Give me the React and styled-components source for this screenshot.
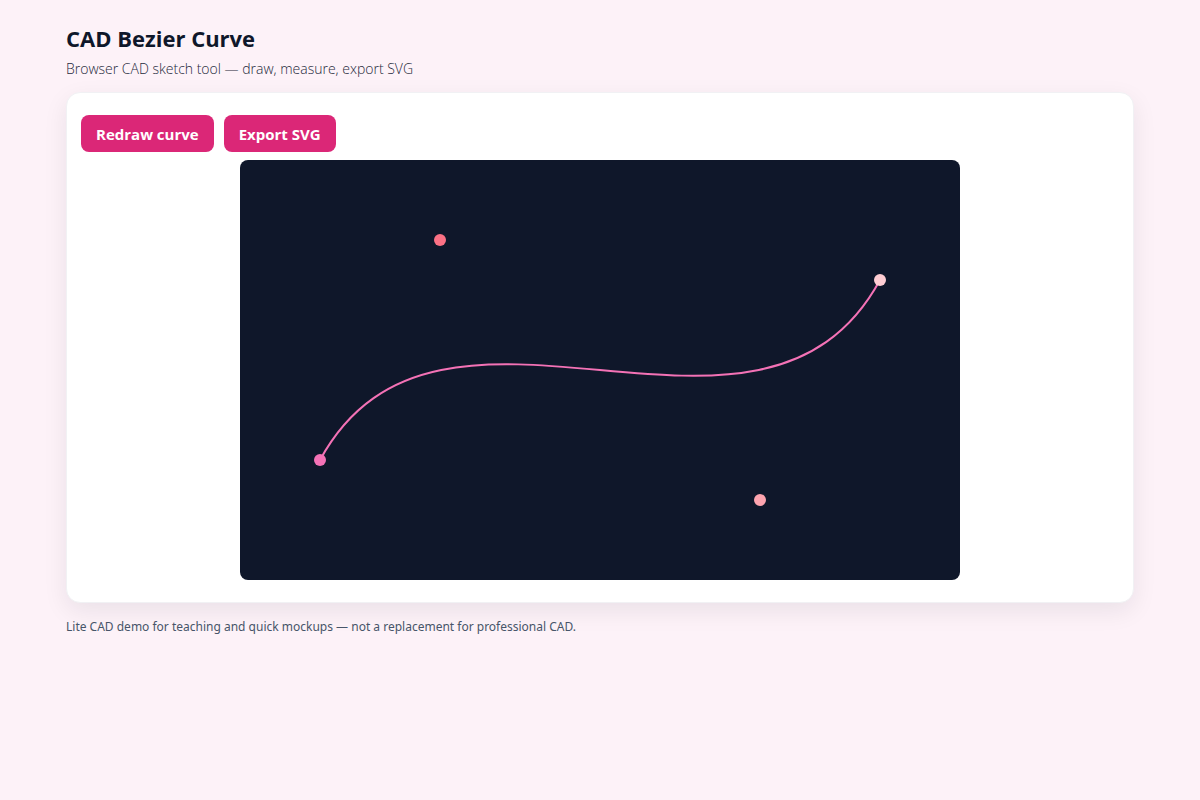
import { useRef, useState } from "react";
import styled, { createGlobalStyle } from "styled-components";

const WIDTH = 720;
const HEIGHT = 420;

const START_POINTS = [
    { x: 80, y: 300, color: "#f472b6" },
    { x: 200, y: 80, color: "#fb7185" },
    { x: 520, y: 340, color: "#fda4af" },
    { x: 640, y: 120, color: "#fecdd3" },
];

const curvePath = (points) => {
    const [a, b, c, d] = points;
    return `M ${a.x} ${a.y} C ${b.x} ${b.y}, ${c.x} ${c.y}, ${d.x} ${d.y}`;
};

const App = () => {
    const svgRef = useRef(null);
    const [points, setPoints] = useState(START_POINTS);
    const [dragged, setDragged] = useState(null);

    const movePoint = (e) => {
        if (dragged === null) return;
        const box = svgRef.current.getBoundingClientRect();
        const x = ((e.clientX - box.left) * WIDTH) / box.width;
        const y = ((e.clientY - box.top) * HEIGHT) / box.height;
        setPoints(points.map((p, i) => (i === dragged ? { ...p, x, y } : p)));
    };

    const exportSvg = () => {
        const source = new XMLSerializer().serializeToString(svgRef.current);
        const url = URL.createObjectURL(new Blob([source], { type: "image/svg+xml" }));
        const link = document.createElement("a");
        link.href = url;
        link.download = "bezier-curve.svg";
        link.click();
        URL.revokeObjectURL(url);
    };

    return (
        <>
            <GlobalStyle />
            <Page>
                <Title>CAD Bezier Curve</Title>
                <Subtitle>Browser CAD sketch tool — draw, measure, export SVG</Subtitle>
                <Card>
                    <Toolbar>
                        <Button type="button" onClick={() => setPoints(START_POINTS)}>Redraw curve</Button>
                        <Button type="button" onClick={exportSvg}>Export SVG</Button>
                    </Toolbar>
                    <Sketch
                        ref={svgRef}
                        viewBox={`0 0 ${WIDTH} ${HEIGHT}`}
                        onPointerMove={movePoint}
                        onPointerUp={() => setDragged(null)}
                        onPointerLeave={() => setDragged(null)}
                    >
                        <path d={curvePath(points)} fill="none" stroke="#f472b6" strokeWidth="2" />
                        {points.map((point, index) => (
                            <Handle
                                key={index}
                                cx={point.x}
                                cy={point.y}
                                r="6"
                                fill={point.color}
                                onPointerDown={() => setDragged(index)}
                            />
                        ))}
                    </Sketch>
                </Card>
                <Note>Lite CAD demo for teaching and quick mockups — not a replacement for professional CAD.</Note>
            </Page>
        </>
    )
}

export default App;

const GlobalStyle = createGlobalStyle`
    * {
        box-sizing: border-box;
    }
    body {
        margin: 0;
        background: #fdf2f8;
        color: #0f172a;
        font-family: "Open Sans", "Noto Sans", sans-serif;
    }
`;
const Page = styled.main`
    max-width: 1100px;
    margin: 0 auto;
    padding: 24px 16px;
`;
const Title = styled.h1`
    margin: 0 0 6px;
    font-size: 22px;
    font-weight: 700;
    line-height: 29px;
`;
const Subtitle = styled.p`
    margin: 0 0 14px;
    color: #1e293b;
    font-size: 14px;
    font-weight: 300;
    line-height: 19px;
`;
const Card = styled.section`
    padding: 22px 14px;
    background: #fff;
    border: 1px solid #f1f1f4;
    border-radius: 14px;
    box-shadow: 0 8px 24px rgba(15, 23, 42, 0.08);
`;
const Toolbar = styled.div`
    display: flex;
    flex-wrap: wrap;
    gap: 10px;
    margin-bottom: 8px;
`;
const Button = styled.button`
    height: 37px;
    padding: 0 15px;
    border: 0;
    border-radius: 8px;
    background: #db2777;
    color: #fff;
    font-family: inherit;
    font-size: 15px;
    font-weight: 700;
    cursor: pointer;
`;
const Sketch = styled.svg`
    display: block;
    width: 100%;
    max-width: 720px;
    margin: 0 auto;
    background: #0f172a;
    border-radius: 8px;
    touch-action: none;
`;
const Handle = styled.circle`
    cursor: grab;
`;
const Note = styled.p`
    margin: 14px 0 0;
    color: #475569;
    font-family: "Noto Sans", sans-serif;
    font-size: 12px;
    line-height: 19px;
`;
